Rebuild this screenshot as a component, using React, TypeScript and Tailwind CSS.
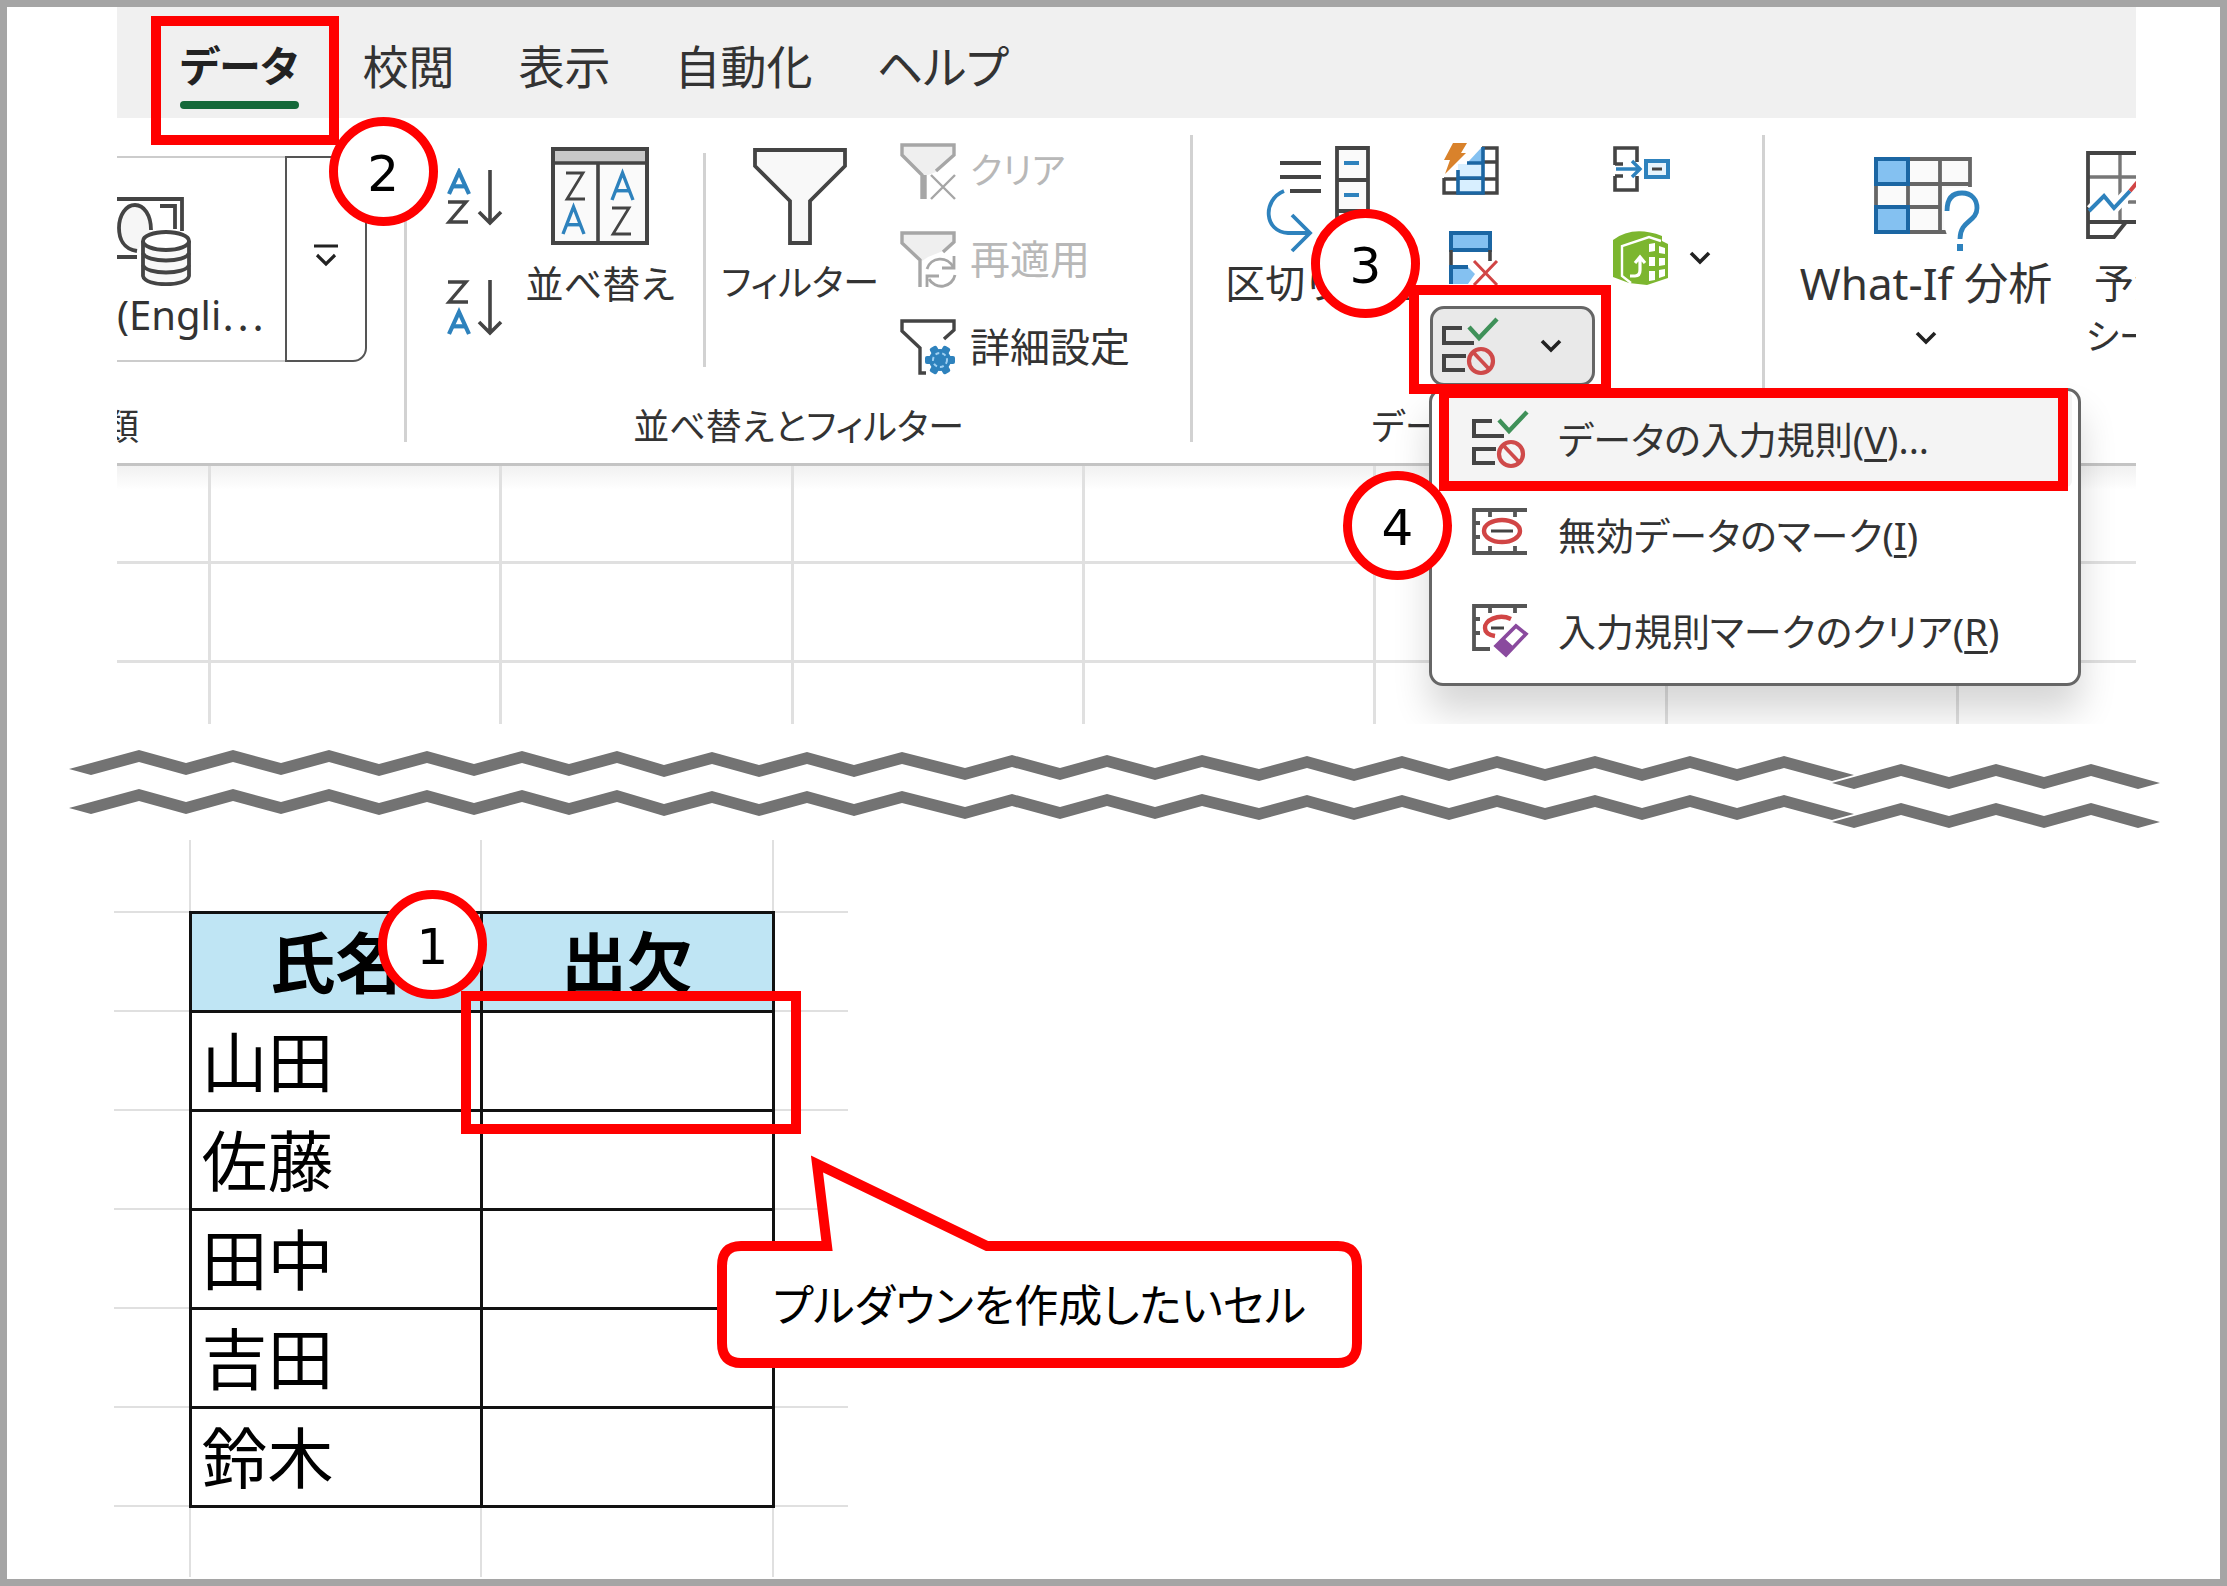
import type { ReactNode } from "react";

const INK = "#444444";
const BLUE = "#2e82bd";
const NAVY = "#1b66a3";
const SKY = "#84c1f1";

/* ---------- annotation marks ---------- */

function Badge({ n, className }: { n: number; className: string }) {
  return (
    <span
      className={`absolute z-30 flex size-[109px] items-center justify-center rounded-full border-[9px] border-[#ff0000] bg-white pt-[4px] font-['DejaVu_Sans',sans-serif] text-[50px] leading-none text-black ${className}`}
    >
      {n}
    </span>
  );
}

function Frame({ className }: { className: string }) {
  return <span className={`pointer-events-none absolute z-20 border-[10px] border-[#ff0000] ${className}`} />;
}

/* ---------- icons ---------- */

function Chevron({ className = "" }: { className?: string }) {
  return (
    <svg viewBox="0 0 22 14" className={`h-[14px] w-[22px] shrink-0 ${className}`} fill="none" stroke="#222" strokeWidth="3.6">
      <path d="M2 2 L11 11 L20 2" />
    </svg>
  );
}

function LetterA({ x, y, h = 24, w = 24, sw = 4.2 }: { x: number; y: number; h?: number; w?: number; sw?: number }) {
  return (
    <g stroke={BLUE} strokeWidth={sw} fill="none">
      <path d={`M${x + 2} ${y + h} L${x + w / 2} ${y + 2} L${x + w - 2} ${y + h}`} />
      <path d={`M${x + 6} ${y + h * 0.68} H${x + w - 6}`} />
    </g>
  );
}

function LetterZ({ x, y, h = 24, w = 21, sw = 3.4 }: { x: number; y: number; h?: number; w?: number; sw?: number }) {
  return (
    <path
      d={`M${x + 1} ${y + 2} H${x + w - 2} L${x + 2} ${y + h - 2} H${x + w}`}
      stroke={INK}
      strokeWidth={sw}
      fill="none"
    />
  );
}

function SortIcon({ descending = false }: { descending?: boolean }) {
  return (
    <svg viewBox="0 0 60 60" className="size-[60px]">
      {descending ? (
        <>
          <LetterZ x={3} y={2} />
          <LetterA x={3} y={32} />
        </>
      ) : (
        <>
          <LetterA x={3} y={2} />
          <LetterZ x={3} y={32} />
        </>
      )}
      <path d="M46 2 V54 M35 44 L46 55 L57 44" stroke={INK} strokeWidth="3.6" fill="none" />
    </svg>
  );
}

function SortDialogIcon() {
  return (
    <svg viewBox="0 0 98 98" className="size-[98px]" fill="none">
      <rect x="2" y="2" width="94" height="94" fill="#fafafa" />
      <rect x="2" y="2" width="94" height="14" fill="#c8c8c8" />
      <rect x="2" y="2" width="94" height="94" stroke={INK} strokeWidth="4" />
      <path d="M2 16 H96 M47 16 V96" stroke={INK} strokeWidth="3.6" />
      <LetterZ x={14} y={24} h={30} w={20} sw={2.8} />
      <LetterA x={10} y={58} h={29} w={25} sw={3.4} />
      <LetterA x={59} y={24} h={29} w={25} sw={3.4} />
      <LetterZ x={60} y={59} h={30} w={20} sw={2.8} />
    </svg>
  );
}

function FilterIcon() {
  return (
    <svg viewBox="0 0 98 98" className="size-[98px]">
      <path d="M4 3 H94 V19 L59 54 V96 H39 V54 L4 19 Z" fill="#f8f8f8" stroke={INK} strokeWidth="3.8" />
    </svg>
  );
}

function ClearFilterIcon() {
  return (
    <svg viewBox="0 0 60 60" className="size-[60px]" fill="none" stroke="#a6a6a6" strokeWidth="3.4">
      <path d="M4 4 H56 V14 L38 31 L30 34 H26 L4 14 Z" fill="#efefef" stroke="none" />
      <path d="M38 30 L56 14 V4 H4 V14 L24 34 V58 M27 34 V58" />
      <path d="M33 34 L57 58 M57 34 L33 58" strokeWidth="2.4" />
    </svg>
  );
}

function ReapplyIcon() {
  return (
    <svg viewBox="0 0 60 60" className="size-[60px]" fill="none" stroke="#a6a6a6" strokeWidth="3.4">
      <path d="M4 4 H56 V14 L45 22 L30 28 L24 32 L4 14 Z" fill="#efefef" stroke="none" />
      <path d="M45 23 L56 13 V4 H4 V14 L22 31 V58" />
      <path d="M29 40 A14 14 0 0 1 55 38 M57 46 A14 14 0 0 1 31 50" strokeWidth="2.8" />
      <path d="M56 27 V39 H44 M29 58 V47 H41" strokeWidth="2.8" />
    </svg>
  );
}

function AdvancedFilterIcon() {
  return (
    <svg viewBox="0 0 60 60" className="size-[60px]" fill="none" stroke={INK} strokeWidth="3.4">
      <path d="M46 22 L56 13 V4 H4 V14 L22 31 V56 H28" />
      <g fill={BLUE} stroke="none">
        <circle cx="42" cy="43" r="11" />
        {[0, 60, 120, 180, 240, 300].map((a) => (
          <rect key={a} x="38" y="28" width="8" height="8" rx="2" transform={`rotate(${a + 30} 42 43)`} />
        ))}
      </g>
      <circle cx="42" cy="43" r="7" stroke="#9fd0f2" strokeWidth="2" strokeDasharray="4 3" />
    </svg>
  );
}

function TextToColumnsIcon() {
  return (
    <svg viewBox="0 0 108 104" className="h-[104px] w-[108px] overflow-visible" fill="none">
      <path d="M16 19 H57 M16 33 H57 M26 47 H57" stroke={INK} strokeWidth="3.8" />
      <path d="M20 47 C-2 56 0 88 24 89 H44 M28 71 L46 89 L28 107" stroke={BLUE} strokeWidth="3.8" />
      <path d="M73 4 H104 V100 H73 Z M73 36 H104 M73 67 H104" fill="#fafafa" stroke={INK} strokeWidth="3.8" />
      <path d="M80 19 H95 M80 51 H95 M80 83 H95" stroke={BLUE} strokeWidth="4" />
    </svg>
  );
}

function FlashFillIcon() {
  return (
    <svg viewBox="0 0 60 60" className="size-[60px]" fill="none">
      <path d="M4 38 V53 H57 V8 H42 M4 39 H57 M42 22 H57" stroke={INK} strokeWidth="3.4" />
      <path d="M42 7 L28 22 H42 Z" fill={SKY} />
      <rect x="18" y="24" width="25" height="14" fill="#d8efff" />
      <rect x="18" y="40" width="25" height="12" fill="#d8efff" />
      <path d="M43 7 V53 H18 V30 M18 38 H43 M27 23 H43" stroke={NAVY} strokeWidth="3.6" />
      <path d="M13 3 H27 L21 13 H26 L5 34 L10 20 H4 Z" fill="#d9822b" />
    </svg>
  );
}

function RemoveDuplicatesIcon() {
  return (
    <svg viewBox="0 0 60 60" className="size-[60px]" fill="none">
      <rect x="11" y="5" width="39" height="17" fill={SKY} stroke={NAVY} strokeWidth="4" />
      <path d="M11 22 V40 M50 22 V33" stroke={INK} strokeWidth="3.6" />
      <path d="M11 39 H28 L35 46 L28 56 H11 Z" fill={SKY} />
      <path d="M28 39 H11 V56" stroke={NAVY} strokeWidth="4" />
      <path d="M34 33 L57 57 M57 33 L34 57" stroke="#d14545" strokeWidth="3" />
    </svg>
  );
}

function ValidationIcon() {
  return (
    <svg viewBox="0 0 60 60" className="size-[60px] shrink-0" fill="none">
      <path d="M22 12 H4 V27 H34 M26 40 H4 V54 H25" stroke={INK} strokeWidth="4" />
      <path d="M29 11 L39 22 L57 3" stroke="#3f9159" strokeWidth="4.4" />
      <circle cx="41" cy="45" r="12" stroke="#cf4a4a" strokeWidth="4.2" />
      <path d="M33 36 L49 53" stroke="#cf4a4a" strokeWidth="3.8" />
    </svg>
  );
}

function CircleInvalidIcon() {
  return (
    <svg viewBox="0 4 60 60" className="size-[60px] shrink-0 overflow-visible" fill="none">
      <path d="M57 9 H4 V52 H57 M20 10 V16 M45 10 V16 M20 51 V45 M45 51 V45 M5 22 H10 M5 36 H10" stroke="#555" strokeWidth="3.8" />
      <ellipse cx="32" cy="30" rx="18" ry="11" fill="#fff" stroke="#d14545" strokeWidth="4.4" />
      <path d="M21 30 H43" stroke={INK} strokeWidth="3" />
    </svg>
  );
}

function ClearCirclesIcon() {
  return (
    <svg viewBox="0 0 60 60" className="size-[60px] shrink-0" fill="none">
      <path d="M57 5 H4 V48 H20 M20 6 V12 M45 6 V12 M5 18 H10 M5 32 H10" stroke="#555" strokeWidth="3.8" />
      <path d="M41 18 C28 12 14 20 15 27 C15 32 19 34 25 35" stroke="#d14545" strokeWidth="4.4" />
      <path d="M21 27 H34" stroke={INK} strokeWidth="3" />
      <path d="M46 25 L56 33 L36 54 L26 45 Z" fill="#fff" stroke="#8a4a9e" strokeWidth="3.6" />
      <path d="M34 37 L44 46 L36 54 L26 45 Z" fill="#8a4a9e" />
    </svg>
  );
}

function ConsolidateIcon() {
  return (
    <svg viewBox="0 0 60 60" className="size-[60px]" fill="none">
      <path d="M4 25 V8 H26 V22 M4 36 V50 H26 V36 M4 24 H12 M4 36 H12" stroke={INK} strokeWidth="3.6" />
      <path d="M5 29 H28 M21 21 L29 29 L21 37" stroke={BLUE} strokeWidth="3.4" />
      <rect x="35" y="21" width="22" height="16" fill="#e6f4fd" stroke={BLUE} strokeWidth="4" />
      <path d="M41 29 H51" stroke={INK} strokeWidth="3" />
    </svg>
  );
}

function DataModelIcon() {
  return (
    <svg viewBox="0 0 60 60" className="size-[60px]" fill="none">
      <path d="M2 12 Q22 -3 51 8 L51 13 L57 16 V50 L36 57 L18 55 L2 49 Z" fill="#7cb62f" />
      <path d="M50 13 L38 9 L11 18 V48 L20 55" stroke="#fff" strokeWidth="2.4" />
      <path d="M19 48 H24 Q29 48 29 42 V30 M24 35 L29 29 L34 35" stroke="#fff" strokeWidth="3.2" />
      <path d="M38 16 L44 15 V23 L38 24 Z M48 18 L54 20 V26 L48 25 Z M38 29 H44 V38 H38 Z M48 30 H54 V37 L48 38 Z M38 43 H44 V52 L38 53 Z M48 42 L54 41 V48 L48 50 Z" fill="#fff" />
    </svg>
  );
}

function WhatIfIcon() {
  return (
    <svg viewBox="0 0 108 100" className="h-[100px] w-[108px]" fill="none">
      <rect x="4" y="3" width="92" height="73" fill="#fafafa" />
      <path d="M36 5 H98 V33 M68 5 V78 M36 30 H98 M4 30 V53 M36 30 V53 M36 53 H68 M36 78 H80" stroke="#666" strokeWidth="3.8" />
      <rect x="4" y="5" width="32" height="25" fill={SKY} stroke={NAVY} strokeWidth="4" />
      <rect x="4" y="53" width="32" height="25" fill={SKY} stroke={NAVY} strokeWidth="4" />
      <path d="M72 72 V34 H108 V96 H80 Z" fill="#fff" />
      <path d="M75 57 C75 44 81 39 90 39 C100 39 105 46 105 54 C105 68 88 66 88 85" stroke={BLUE} strokeWidth="4.8" />
      <rect x="85" y="90" width="6" height="7" fill={BLUE} />
    </svg>
  );
}

function ForecastIcon() {
  return (
    <svg viewBox="0 0 96 92" className="h-[92px] w-[96px]" fill="none">
      <path d="M2 3 H94 V88 M2 27 H94 M34 3 V72 M64 3 V72 M42 52 H94" stroke="#777" strokeWidth="3.4" />
      <path d="M94 3 H2 V87 H28 L40 72 M2 72 H94" stroke={INK} strokeWidth="3.8" />
      <path d="M5 60 L18 46 L28 58 L42 43" stroke="#fff" strokeWidth="11" />
      <path d="M3 61 L18 46 L28 58 L44 41" stroke={BLUE} strokeWidth="4" />
      <path d="M44 41 L60 22" stroke="#d14545" strokeWidth="4" />
    </svg>
  );
}

function CurrencyIcon() {
  return (
    <svg viewBox="0 0 100 92" className="h-[92px] w-[100px]" fill="none" stroke={INK} strokeWidth="3.8">
      <path d="M0 5 H91 V37 M0 63 H46" />
      <path d="M69 12 H84 V35" />
      <path d="M46 57 C32 55 28 44 28 34 C28 21 35 11 44 11 C53 11 60 21 60 36" fill="#f6f6f6" />
      <path d="M52 47 V82 C54 93 96 93 98 82 V47" fill="#f8f8f8" />
      <ellipse cx="75" cy="47" rx="23" ry="9" fill="#fff" />
      <path d="M52 59 C55 69 95 69 98 59 M52 71 C55 81 95 81 98 71" />
    </svg>
  );
}

/* ---------- ribbon ---------- */

const tabs = ["データ", "校閲", "表示", "自動化", "ヘルプ"];

function Group({ label, children, className = "" }: { label: ReactNode; children: ReactNode; className?: string }) {
  return (
    <section className={`flex shrink-0 flex-col justify-between ${className}`}>
      <div className="flex items-start">{children}</div>
      <p className="h-[30px] text-center text-[36px] leading-[30px]">{label}</p>
    </section>
  );
}

function Separator() {
  return <div className="w-[3px] shrink-0 bg-[#d2d2d2]" />;
}

function BigButton({ icon, children, className = "" }: { icon: ReactNode; children: ReactNode; className?: string }) {
  return (
    <button type="button" className={`flex shrink-0 flex-col items-center pt-[5px] whitespace-nowrap ${className}`}>
      <span className="flex h-[112px] items-center">{icon}</span>
      <span className="mt-[11px] leading-[40px]">{children}</span>
    </button>
  );
}

function SmallButton({ icon, label, disabled, className = "" }: { icon: ReactNode; label: string; disabled?: boolean; className?: string }) {
  return (
    <button
      type="button"
      disabled={disabled}
      className={`flex h-[60px] items-center gap-[12px] whitespace-nowrap disabled:text-[#b8b8b8] ${className}`}
    >
      {icon}
      <span>{label}</span>
    </button>
  );
}

function MenuItem({ icon, text, hotkey, tail = "", active = false }: { icon: ReactNode; text: string; hotkey: string; tail?: string; active?: boolean }) {
  return (
    <button
      type="button"
      role="menuitem"
      className={`flex h-[96px] w-full items-center gap-[28px] rounded-[6px] pl-[30px] whitespace-nowrap ${active ? "bg-[#f4f4f4]" : ""}`}
    >
      {icon}
      <span>
        {text}(<u className="decoration-[3px] underline-offset-[5px]">{hotkey}</u>){tail}
      </span>
    </button>
  );
}

function ValidationMenu() {
  return (
    <div
      role="menu"
      className="absolute top-[82px] -left-px z-10 w-[652px] rounded-[14px] border-[3px] border-[#666] bg-white pr-[6px] pb-[4px] pl-[8px] text-[38px] shadow-[0_26px_36px_rgba(0,0,0,0.16)]"
    >
      <div className="relative">
        <MenuItem active icon={<ValidationIcon />} text="データの入力規則" hotkey="V" tail="..." />
        <Frame className="-top-[3px] right-[4px] -bottom-[4px] -left-px" />
        <Badge n={4} className="top-[80px] -left-[97px]" />
      </div>
      <MenuItem icon={<CircleInvalidIcon />} text="無効データのマーク" hotkey="I" />
      <MenuItem icon={<ClearCirclesIcon />} text="入力規則マークのクリア" hotkey="R" />
    </div>
  );
}

function Ribbon() {
  return (
    <section className="relative mr-[84px] ml-[110px] overflow-hidden">
      <nav className="flex h-[111px] items-start gap-[64px] bg-[#f0f0f0] pl-[63px] text-[46px] text-[#333]">
        {tabs.map((t, i) => (
          <div key={t} className="relative shrink-0 pt-[33px]">
            <button
              type="button"
              className={`block leading-[52px] whitespace-nowrap ${i === 0 ? "text-[42px] font-bold text-[#222]" : ""}`}
            >
              {t}
            </button>
            {i === 0 && (
              <>
                <span className="mt-[9px] block h-[8px] rounded-full bg-[#15693a]" />
                <Frame className="top-[9px] -right-[40px] -bottom-[36px] -left-[29px]" />
                <Badge n={2} className="top-[110px] -right-[139px]" />
              </>
            )}
          </div>
        ))}
      </nav>

      <div className="relative z-10 flex h-[348px] border-b-[3px] border-[#c4c4c4] bg-white pt-[17px] pb-[21px] text-[40px] text-[#333]">
        <Group className="w-[287px]" label={<span className="flex w-[22px] justify-end whitespace-nowrap">データの種類</span>}>
          <div className="mt-[21px] flex h-[206px] w-[250px]">
            <button type="button" className="flex flex-1 flex-col items-start border-y-[2px] border-[#cccccc] pt-[36px]">
              <span className="-ml-[26px]">
                <CurrencyIcon />
              </span>
              <span className="mt-[7px] leading-[40px]">
                (Engli<span className="font-['Noto_Sans_CJK_JP',sans-serif]">⋯</span>
              </span>
            </button>
            <button
              type="button"
              aria-label="データの種類の一覧"
              className="flex w-[82px] flex-col items-center justify-center rounded-br-[14px] border-[2px] border-[#555] pb-[8px]"
            >
              <svg viewBox="0 0 26 24" className="h-[24px] w-[26px]" fill="none" stroke="#222" strokeWidth="3.2">
                <path d="M1 3 H25 M4 12 L13 21 L22 12" />
              </svg>
            </button>
          </div>
        </Group>
        <Separator />
        <Group className="w-[783px]" label="並べ替えとフィルター">
          <div className="ml-[37px] flex flex-col gap-[50px] pt-[33px]">
            <button type="button" aria-label="昇順">
              <SortIcon />
            </button>
            <button type="button" aria-label="降順">
              <SortIcon descending />
            </button>
          </div>
          <BigButton className="ml-[19px] w-[154px] text-[38px]" icon={<SortDialogIcon />}>
            並べ替え
          </BigButton>
          <div className="mt-[18px] ml-[26px] h-[214px] w-[3px] bg-[#d2d2d2]" />
          <BigButton className="ml-[16px] w-[156px] text-[36px]" icon={<FilterIcon />}>
            フィルター
          </BigButton>
          <div className="ml-[20px] flex flex-col gap-[28px] pt-[6px]">
            <SmallButton disabled className="text-[36px]" icon={<ClearFilterIcon />} label="クリア" />
            <SmallButton disabled icon={<ReapplyIcon />} label="再適用" />
            <SmallButton icon={<AdvancedFilterIcon />} label="詳細設定" />
          </div>
        </Group>
        <Separator />
        <Group className="w-[569px]" label="データ ツール">
          <BigButton className="ml-[32px] w-[194px]" icon={<span className="mr-[8px]"><TextToColumnsIcon /></span>}>
            区切り位置
          </BigButton>
          <div className="ml-[11px] flex flex-col gap-[28px] pt-[5px]">
            <button type="button" aria-label="フラッシュ フィル" className="ml-[10px] size-[60px]">
              <FlashFillIcon />
            </button>
            <button type="button" aria-label="重複の削除" className="ml-[10px] size-[60px]">
              <RemoveDuplicatesIcon />
            </button>
            <div className="relative flex h-[60px] items-center">
              <div className="relative">
                <button
                  type="button"
                  aria-label="データの入力規則"
                  aria-haspopup="menu"
                  className="flex h-[80px] w-[165px] items-center rounded-[14px] border-[3px] border-[#666] bg-[#e9e9e9] pl-[7px]"
                >
                  <ValidationIcon />
                  <Chevron className="ml-[40px]" />
                </button>
                <ValidationMenu />
                <Frame className="-top-[21px] -right-[16px] -bottom-[8px] -left-[21px]" />
                <Badge n={3} className="-top-[97px] -left-[119px]" />
              </div>
            </div>
          </div>
          <div className="ml-[16px] flex flex-col gap-[28px] pt-[5px]">
            <button type="button" aria-label="統合" className="size-[60px]">
              <ConsolidateIcon />
            </button>
            <button type="button" aria-label="データ モデル" className="flex items-center gap-[18px]">
              <DataModelIcon />
              <Chevron />
            </button>
          </div>
        </Group>
        <Separator />
        <Group className="w-[440px]" label="予測">
          <BigButton className="ml-[26px] w-[270px]" icon={<span className="pt-[16px]"><WhatIfIcon /></span>}>
            <span className="text-[44px]">What-If 分析</span>
            <Chevron className="mx-auto mt-[26px]" />
          </BigButton>
          <BigButton className="ml-[25px] w-[96px]" icon={<ForecastIcon />}>
            予測
            <span className="mt-[14px] block text-[36px]">シート</span>
          </BigButton>
        </Group>
      </div>

      <div className="grid h-[258px] grid-cols-[94px_repeat(6,1fr)_177px] grid-rows-[98px_99px_61px] bg-gradient-to-b from-[#f1f1f1] to-white to-[24px]">
        {Array.from({ length: 24 }, (_, i) => (
          <div
            key={i}
            className={`${i % 8 < 7 ? "border-r-[3px]" : ""} ${i < 16 ? "border-b-[3px]" : ""} border-[#e0e0e0]`}
          />
        ))}
      </div>
    </section>
  );
}

/* ---------- torn edge between the two captures ---------- */

const wave: [number, number][] = [
  [139, 749], [186, 774], [233, 749], [281, 774], [329, 749], [379, 775], [427, 750], [474, 775],
  [522, 750], [569, 775], [617, 750], [664, 776], [712, 751], [759, 776], [807, 751], [854, 776],
  [902, 751], [965, 779], [1012, 754], [1060, 779], [1107, 754], [1155, 779], [1202, 754], [1259, 780],
  [1307, 755], [1354, 780], [1402, 755], [1449, 780], [1497, 755], [1545, 780], [1595, 755], [1642, 780],
  [1690, 755], [1737, 780], [1784, 755],
];
const tailWave: [number, number][] = [
  [1901, 763], [1949, 788], [1996, 763], [2044, 788], [2091, 763],
];

function band(points: [number, number][], left: number, right: number, y0: number, y1: number) {
  const top = points.map(([x, y], i) => `${x},${i % 2 ? y - 12 : y}`);
  const bottom = points.map(([x, y], i) => `${x},${i % 2 ? y : y + 12}`).reverse();
  return [`${left},${y0 - 6}`, ...top, `${right + 22},${y1 - 6}`, `${right},${y1}`, ...bottom, `${left + 22},${y0}`].join(" ");
}

function TornEdge() {
  return (
    <svg viewBox="7 723 2213 116" className="block w-full" fill="#737373" aria-hidden="true">
      {[0, 39].map((dy) => (
        <g key={dy} transform={`translate(0 ${dy})`}>
          <polygon points={band(wave, 69, 1832, 774, 780)} />
          <polygon points={band(tailWave, 1832, 2138, 788, 788)} />
        </g>
      ))}
    </svg>
  );
}

/* ---------- attendance sheet ---------- */

const names = ["山田", "佐藤", "田中", "吉田", "鈴木"];
const faint = "border-2 border-[#e0e0e0]";
const solid = "border-[3px] border-[#111]";

function Sheet() {
  return (
    <table className="w-[734px] table-fixed border-collapse text-[66px] leading-none text-black">
      <colgroup>
        <col className="w-[76px]" />
        <col className="w-[291px]" />
        <col className="w-[292px]" />
        <col className="w-[75px]" />
      </colgroup>
      <tbody>
        <tr className="h-[72px]">
          <td className={`${faint} border-t-0 border-l-0`} />
          <td className={`${faint} border-t-0`} />
          <td className={`${faint} border-t-0`} />
          <td className={`${faint} border-t-0 border-r-0`} />
        </tr>
        <tr className="h-[99px]">
          <td className={`${faint} border-l-0`} />
          <th scope="col" className={`${solid} bg-[#bfe5f4] p-0 font-bold`}>氏名</th>
          <th scope="col" className={`${solid} bg-[#bfe5f4] p-0 font-bold`}>出欠</th>
          <td className={`${faint} border-r-0`} />
        </tr>
        {names.map((n) => (
          <tr key={n} className="h-[99px]">
            <td className={`${faint} border-l-0`} />
            <td className={`${solid} p-0 pl-[10px]`}>{n}</td>
            <td className={`${solid} p-0`} />
            <td className={`${faint} border-r-0`} />
          </tr>
        ))}
        <tr className="h-[71px]">
          <td className={`${faint} border-b-0 border-l-0`} />
          <td className={`${faint} border-b-0`} />
          <td className={`${faint} border-b-0`} />
          <td className={`${faint} border-r-0 border-b-0`} />
        </tr>
      </tbody>
    </table>
  );
}

function Callout() {
  return (
    <div className="absolute top-[311px] left-[603px] z-20 h-[217px] w-[645px]">
      <svg viewBox="0 0 645 217" className="absolute inset-0 size-full" fill="#fff" stroke="#ff0000" strokeWidth="10">
        <path d="M24 95 H110 L100 13 L270 95 H621 Q640 95 640 115 V192 Q640 212 621 212 H24 Q5 212 5 192 V115 Q5 95 24 95 Z" />
      </svg>
      <p className="absolute inset-x-0 top-[90px] bottom-0 flex items-center justify-center text-[44px] whitespace-nowrap text-black">
        プルダウンを作成したいセル
      </p>
    </div>
  );
}

export default function App() {
  return (
    <main className="min-h-screen border-[7px] border-[#a5a5a5] bg-white font-['Noto_Sans','Noto_Sans_CJK_JP',sans-serif] [font-feature-settings:'palt']">
      <Ribbon />
      <TornEdge />
      <section className="relative ml-[107px]">
        <Sheet />
        <Frame className="top-[151px] left-[347px] h-[143px] w-[340px]" />
        <Badge n={1} className="top-[50px] left-[264px]" />
        <Callout />
      </section>
    </main>
  );
}
